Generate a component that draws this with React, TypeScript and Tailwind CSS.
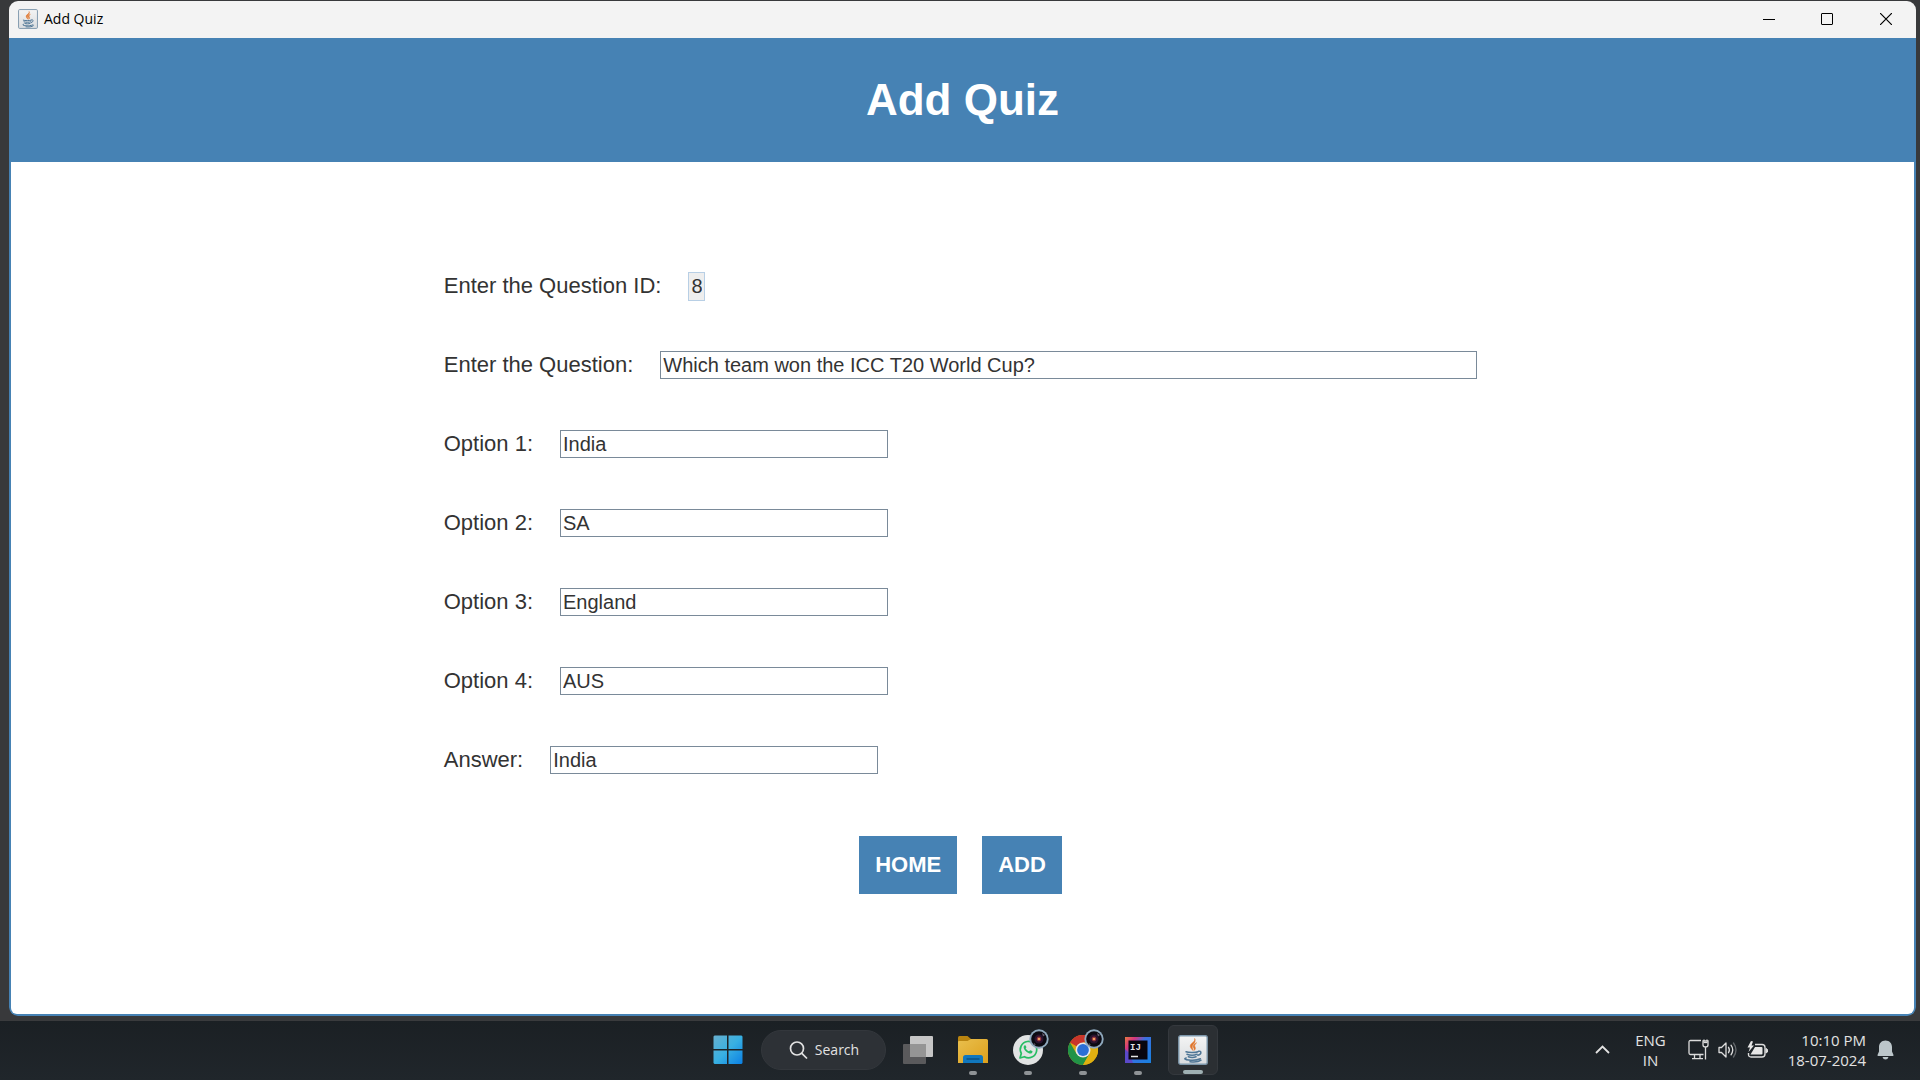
import React from "react";

type FieldProps = {
  id: string;
  label: string;
  value: string;
  className: string;
  readOnly?: boolean;
};

const fieldStyle =
  "h-7 border border-[#7a8a99] bg-white px-[2px] text-[20px] leading-6 text-[#333333] outline-none";

function Field({ id, label, value, className, readOnly }: FieldProps) {
  return (
    <div className="flex h-7 items-center gap-[27px]">
      <label htmlFor={id} className="whitespace-nowrap text-[22px] leading-7">
        {label}
      </label>
      <input id={id} type="text" defaultValue={value} readOnly={readOnly} className={className} />
    </div>
  );
}

function JavaIcon({ size }: { size: number }) {
  return (
    <svg width={size} height={size} viewBox="0 0 30 30" fill="none">
      <defs>
        <linearGradient id="javaTile" x1="0" y1="0" x2="0" y2="1">
          <stop offset="0" stopColor="#f4f4f4" />
          <stop offset="1" stopColor="#d9dcdf" />
        </linearGradient>
      </defs>
      <rect x="0.8" y="0.8" width="28.4" height="28.4" rx="1.8" fill="url(#javaTile)" stroke="#7d97ab" strokeWidth="1.4" />
      <path d="M16.6 3.5c1.6 3.4-4.8 4.6-4.3 8 .2 1.500 1.600 2.600 2.500 3.900-.2-2-.9-3-.5-4.300.6-2.200 4-3.600 2.300-7.600z" fill="#e0752c" stroke="#e0752c" strokeWidth="0.600" />
      <path d="M18.600 7.800c-2 1-3.700 2.100-3.400 4 .2 1.200 1.500 1.700.8 3.700 1.700-1.300 1.600-2.500.9-3.800-.7-1.300.1-2.500 1.700-3.900z" fill="#e0752c" stroke="#e0752c" strokeWidth="0.600" />
      <g stroke="#4f7696" strokeWidth="1.500" strokeLinecap="round">
        <path d="M8 16.800c2.500 1 9.300 1 12-.1" />
        <path d="M9 19.300c2.500.9 7.600.9 10.100 0" />
        <path d="M10.300 21.700c2.200.8 5.600.8 7.800 0" />
        <path d="M20.500 16.300c3.200-.8 3.300 2.900-.6 4" />
        <path d="M8.200 22.900c-5.600 1.700 8 3.900 14.200.9" />
        <path d="M12 26.800c4 .5 9 0 11-1.600" />
      </g>
    </svg>
  );
}

function LensBadge() {
  return (
    <svg width="20" height="20" viewBox="0 0 20 20" className="absolute -right-[6px] -top-[6px]">
      <circle cx="10" cy="10" r="9.700" fill="#8fa9bd" />
      <circle cx="10" cy="10" r="7.800" fill="#0b0a12" />
      <circle cx="10" cy="10" r="4.500" fill="#2b1430" />
      <circle cx="10" cy="10" r="2.400" fill="#8a2d3a" />
      <circle cx="10" cy="10" r="1.300" fill="#f0a060" />
      <path d="M13 4l3 2-2 1.500zM5 14l2 2-2.500-.5z" fill="#6b6275" />
    </svg>
  );
}

function WindowsLogo() {
  return (
    <svg width="30" height="30" viewBox="0 0 30 30">
      <defs>
        <linearGradient id="win" x1="0" y1="0" x2="1" y2="1">
          <stop offset="0" stopColor="#67b0cf" />
          <stop offset="0.500" stopColor="#38b0e2" />
          <stop offset="1" stopColor="#0b80e4" />
        </linearGradient>
      </defs>
      <path
        d="M1.500 0.500H14V14H.5V1.500zM15.500.5H28.500l1 1V14H15.500zM.5 15.500H14V29H1.500l-1-1zM15.500 15.500H29.500V28l-1 1H15.500z"
        fill="url(#win)"
      />
    </svg>
  );
}

function FolderIcon() {
  return (
    <svg width="30" height="27" viewBox="0 0 30 27">
      <defs>
        <linearGradient id="folder" x1="0" y1="0" x2="1" y2="1">
          <stop offset="0" stopColor="#e9bf4d" />
          <stop offset="1" stopColor="#dda01c" />
        </linearGradient>
      </defs>
      <path d="M0 1.500Q0 0 1.500 0H9.500l3.500 3V8H0z" fill="#b98410" />
      <path d="M0 6Q0 5 1 5H9.500l3.500-2H28.500Q30 3 30 4.500V27H0z" fill="url(#folder)" />
      <path d="M5 27V21.500Q5 19 7.500 19H22.500Q25 19 25 21.500V27z" fill="#1177bd" />
      <path d="M8.500 23H21.500" stroke="#0a4778" strokeWidth="1.200" />
    </svg>
  );
}

function WhatsAppIcon() {
  return (
    <svg width="30" height="30" viewBox="0 0 30 30" fill="none">
      <circle cx="15" cy="15" r="15" fill="#e1e3e3" />
      <path d="M7 23l1.300-4.500A8.200 8.200 0 1 1 11.400 21.700z" stroke="#27bd63" strokeWidth="1.700" strokeLinejoin="round" />
      <path
        d="M12.400 10.300c-.5-.3-1.200.1-1.500.8-.9 2 .9 4.500 2.700 5.900 1.800 1.500 4.200 2.200 5.500.7.6-.7.500-1.300.1-1.600l-1.800-.9c-.6-.2-.9 1.100-1.500 1-1.200-.3-2.900-1.900-3.200-2.900-.1-.5.900-.8.700-1.400z"
        fill="#27bd63"
      />
    </svg>
  );
}

function ChromeIcon() {
  return (
    <svg width="30" height="30" viewBox="0 0 30 30">
      <circle cx="15" cy="15" r="15" fill="#d9a90f" />
      <path d="M15 15L2 7.500A15 15 0 0 1 28 7.500H15z" fill="#c9352b" />
      <path d="M2 7.500A15 15 0 0 0 15 30L21.500 18.700 15 15 8.500 18.700z" fill="#219347" />
      <path d="M15 7.500H28A15 15 0 0 1 15 30l6.500-11.300z" fill="#e0b010" />
      <circle cx="15" cy="15" r="7.500" fill="#e6e8ea" />
      <circle cx="15" cy="15" r="5.900" fill="#2b6fd6" />
    </svg>
  );
}

function IntelliJIcon() {
  return (
    <svg width="26" height="26" viewBox="0 0 26 26">
      <defs>
        <linearGradient id="ij" x1="0" y1="0" x2="1" y2="0.800">
          <stop offset="0" stopColor="#e8793f" />
          <stop offset="0.250" stopColor="#d6357f" />
          <stop offset="0.500" stopColor="#3b6fe0" />
          <stop offset="1" stopColor="#1c7fe0" />
        </linearGradient>
      </defs>
      <rect width="26" height="26" fill="url(#ij)" />
      <path d="M0 12L4 16 8 26H0z" fill="#5b49c9" />
      <rect x="3.500" y="3.500" width="19" height="19" fill="#08060f" />
      <path d="M6 19.500h7" stroke="#e5e5e5" strokeWidth="1.500" />
      <text x="5" y="12.500" fontFamily="Liberation Mono, monospace" fontWeight="700" fontSize="9" fill="#e5e5e5">
        IJ
      </text>
    </svg>
  );
}

function TaskButton({
  label,
  running,
  active,
  children,
}: {
  label: string;
  running?: boolean;
  active?: boolean;
  children: React.ReactNode;
}) {
  return (
    <button
      aria-label={label}
      className={
        active
          ? "relative flex h-[50px] w-[50px] items-center justify-center rounded-md border border-[#34383d] bg-[#2b2f33]"
          : "relative flex h-[50px] w-[50px] items-center justify-center"
      }
    >
      <span className="relative block">{children}</span>
      {running && (
        <span
          className={
            active
              ? "absolute bottom-0 h-1 w-5 rounded-full bg-[#9fb0b3]"
              : "absolute bottom-0 h-1 w-2 rounded-full bg-[#8f9396]"
          }
        />
      )}
    </button>
  );
}

function Taskbar() {
  return (
    <footer className="grid h-[60px] shrink-0 grid-cols-[1fr_auto_1fr] items-center border-t border-[#3a3b3d] bg-gradient-to-b from-[#1b2024] to-[#20262b] pb-[2px] font-['Open_Sans',sans-serif] text-[15px] leading-5 text-[#e2e2e2]">
      <nav aria-label="Taskbar" className="col-start-2 flex items-center gap-[5px]">
        <TaskButton label="Start">
          <WindowsLogo />
        </TaskButton>
        <button className="ml-[3px] mr-[2px] flex h-10 w-[125px] items-center justify-center gap-1 rounded-full border border-[#33373c] bg-[#2d3136]">
          <svg width="24" height="20" viewBox="0 0 24 20" fill="none" stroke="#e2e2e2" strokeWidth="1.700">
            <circle cx="10" cy="8.500" r="6.500" />
            <path d="M14.600 13.100L20 18.500" />
          </svg>
          <span className="text-[14px]">Search</span>
        </button>
        <TaskButton label="Task view">
          <svg width="30" height="28" viewBox="0 0 30 28">
            <rect x="0" y="8" width="23" height="20" rx="1" fill="#5a5a5c" />
            <rect x="7" y="0" width="23" height="21" rx="1" fill="#c6c6c6" />
            <rect x="7" y="8" width="16" height="13" fill="#959595" />
          </svg>
        </TaskButton>
        <TaskButton label="File Explorer" running>
          <FolderIcon />
        </TaskButton>
        <TaskButton label="WhatsApp" running>
          <WhatsAppIcon />
          <LensBadge />
        </TaskButton>
        <TaskButton label="Chrome" running>
          <ChromeIcon />
          <LensBadge />
        </TaskButton>
        <TaskButton label="IntelliJ IDEA" running>
          <IntelliJIcon />
        </TaskButton>
        <TaskButton label="Add Quiz" running active>
          <JavaIcon size={30} />
        </TaskButton>
      </nav>
      <div className="flex items-center justify-end pr-[26px]">
        <button aria-label="Show hidden icons" className="mr-[25px]">
          <svg width="15" height="9" viewBox="0 0 15 9" fill="none" stroke="#e2e2e2" strokeWidth="1.800">
            <path d="M1 8l6.500-6.500L14 8" />
          </svg>
        </button>
        <button className="mr-[22px] text-center">
          <span className="block">ENG</span>
          <span className="block">IN</span>
        </button>
        <button aria-label="Network, volume and battery" className="mr-5 flex items-center gap-[9px]">
          <svg width="21" height="21" viewBox="0 0 21 21" fill="none" stroke="#dcdcdc" strokeWidth="1.300">
            <path d="M13 1.500H2.500Q1 1.500 1 3V14Q1 15.500 2.500 15.500H15.500M6.500 15.500V19.500M12 15.500V19.500M4 19.700H15" />
            <path d="M15 2V6Q15 8 17.500 8T20 6V2zM16 2V.5M19 2V.5M17.500 8V20.500" />
            <path d="M15.500 3.500h4" />
          </svg>
          <svg width="20" height="18" viewBox="0 0 20 18" fill="none" stroke="#dcdcdc" strokeWidth="1.300" strokeLinejoin="round">
            <path d="M1 6.500H3.500L8 2V16L3.500 11.500H1z" />
            <path d="M10.500 6.300q1.800 2.700 0 5.400M13 4.200q3.500 4.800 0 9.600" strokeLinecap="round" />
            <path d="M15.500 2q5 7 0 14" stroke="#62666a" strokeLinecap="round" />
          </svg>
          <svg width="21" height="18" viewBox="0 0 21 18" fill="none">
            <path d="M8 3.500H15Q18 3.500 18 6.500V13Q18 16 15 16H4Q1.500 16 1.500 13.500V12" stroke="#dcdcdc" strokeWidth="1.400" />
            <path d="M8 6H14.500Q15.500 6 15.500 7V12.500Q15.500 13.500 14.500 13.500H3.500z" fill="#e6e6e6" />
            <path d="M19 7.500V12l1.500-1V8.500z" fill="#dcdcdc" stroke="#dcdcdc" />
            <path d="M4 0L.5 6.500H3L1.500 11 7 4.500H4.500L6 .5z" fill="#e6e6e6" />
          </svg>
        </button>
        <button className="mr-[11px] text-right">
          <span className="block">10:10 PM</span>
          <span className="block">18-07-2024</span>
        </button>
        <button aria-label="Notifications">
          <svg width="17" height="20" viewBox="0 0 17 20" fill="#bcc6ca">
            <path d="M8.500.5C4.600.5 2 3.400 2 7V11.500L.5 15Q.2 16 1.300 16H15.700Q16.800 16 16.500 15L15 11.500V7C15 3.400 12.400.5 8.500.5zM5.500 17h6q-.7 2.500-3 2.500T5.500 17z" />
          </svg>
        </button>
      </div>
    </footer>
  );
}

export default function App() {
  return (
    <div className="flex h-screen flex-col overflow-hidden bg-[#38393b]">
      <section className="mb-1 ml-[9px] mr-1 mt-px flex min-h-0 flex-1 flex-col overflow-hidden rounded-[9px]">
        <div className="flex h-[37px] shrink-0 items-center justify-between bg-[#f3f3f3] pb-px pl-[9px]">
          <div className="flex items-center gap-[6px]">
            <JavaIcon size={20} />
            <span className="font-['Open_Sans',sans-serif] text-[14px] leading-5 text-black">Add Quiz</span>
          </div>
          <div className="flex h-full items-center">
            <button aria-label="Minimize" className="flex h-full w-[58px] items-center justify-center">
              <span className="h-px w-3 bg-black" />
            </button>
            <button aria-label="Maximize" className="flex h-full w-[58px] items-center justify-center">
              <span className="h-3 w-3 rounded-[1px] border border-black" />
            </button>
            <button aria-label="Close" className="flex h-full w-[60px] items-center justify-center">
              <svg width="12" height="12" viewBox="0 0 12 12" stroke="#000" strokeWidth="1.200">
                <path d="M0 0l12 12M12 0L0 12" />
              </svg>
            </button>
          </div>
        </div>
        <main className="flex flex-1 flex-col rounded-b-[8px] border-x-2 border-b-2 border-[#4682b4] bg-white font-['Liberation_Sans',Arial,sans-serif] text-[#333333]">
          <header className="flex h-[124px] shrink-0 items-center justify-center bg-[#4682b4]">
            <h1 className="text-[44px] font-bold leading-[52px] text-white">Add Quiz</h1>
          </header>
          <form className="mx-auto mt-[110px] flex flex-col pr-1" onSubmit={(e) => e.preventDefault()}>
            <div className="flex flex-col gap-[51px]">
              <Field
                id="question-id"
                label="Enter the Question ID:"
                value="8"
                readOnly
                className="h-[29px] w-[17px] border border-[#b8cfe5] bg-[#eeeeee] px-[2px] text-[20px] leading-6 outline-none"
              />
              <Field
                id="question"
                label="Enter the Question:"
                value="Which team won the ICC T20 World Cup?"
                className={fieldStyle + " w-[817px]"}
              />
              <Field id="option-1" label="Option 1:" value="India" className={fieldStyle + " w-[328px]"} />
              <Field id="option-2" label="Option 2:" value="SA" className={fieldStyle + " w-[328px]"} />
              <Field id="option-3" label="Option 3:" value="England" className={fieldStyle + " w-[328px]"} />
              <Field id="option-4" label="Option 4:" value="AUS" className={fieldStyle + " w-[328px]"} />
              <Field id="answer" label="Answer:" value="India" className={fieldStyle + " w-[328px]"} />
            </div>
            <div className="mt-[62px] flex justify-center gap-[25px] text-[22px] font-bold leading-[26px] text-white">
              <button type="button" className="bg-[#4682b4] px-4 py-4">
                HOME
              </button>
              <button type="submit" className="bg-[#4682b4] px-4 py-4">
                ADD
              </button>
            </div>
          </form>
        </main>
      </section>
      <Taskbar />
    </div>
  );
}
